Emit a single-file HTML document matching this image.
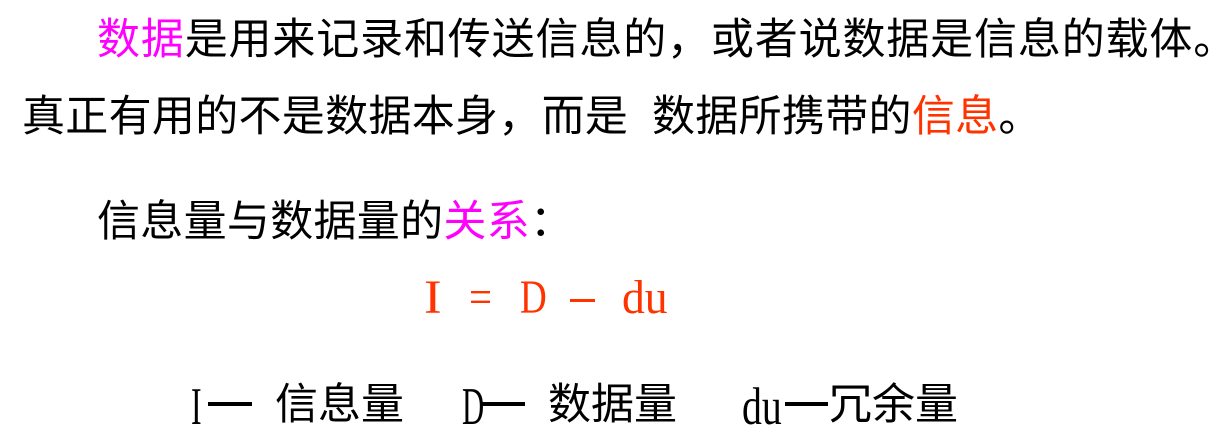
<!DOCTYPE html>
<html><head><meta charset="utf-8"><style>
body{margin:0;width:1220px;height:434px;background:#fff;overflow:hidden;position:relative;font-family:"Liberation Sans","Noto Sans CJK SC",sans-serif;color:#000}
.t{position:absolute;font-size:43px;line-height:44px;white-space:nowrap}
.m{color:#ff00ff}.r{color:#ff3300}
.s{position:absolute;font-family:"Liberation Serif",serif;font-size:48px;line-height:44px;white-space:nowrap;transform-origin:left}
.b{font-size:53px}
.d{position:absolute;height:4px;background:#000}
</style></head><body>
<div class="t" style="left:97px;top:18px;letter-spacing:0.85px"><span class="m">数据</span>是用来记录和传送信息的，或者说数据是信息的载体。</div>
<div class="t" style="left:22px;top:95px;letter-spacing:0.3px">真正有用的不是数据本身，而是</div>
<div class="t" style="left:652px;top:95px;letter-spacing:0.3px">数据所携带的<span style="color:#ff3300">信息</span>。</div>
<div class="t" style="left:97px;top:200px;letter-spacing:0.3px">信息量与数据量的<span class="m">关系</span>：</div>
<div class="s r" style="left:424px;top:276px;transform:scaleX(1.1)">I</div>
<div class="s r" style="left:469px;top:276px;transform:scaleX(0.85)">=</div>
<div class="s r" style="left:520px;top:276px;transform:scaleX(0.77)">D</div>
<div style="position:absolute;left:570px;top:299px;width:25px;height:3px;background:#ff3300"></div>
<div class="s r" style="left:622px;top:276px;transform:scaleX(0.95)">du</div>
<div class="s b" style="left:191px;top:385px;transform:scaleX(0.6)">I</div>
<div class="d" style="left:208px;top:402px;width:44px"></div>
<div class="t" style="left:275px;top:383px">信息量</div>
<div class="s b" style="left:462px;top:385px;transform:scaleX(0.58)">D</div>
<div class="d" style="left:481px;top:402px;width:44px"></div>
<div class="t" style="left:548px;top:383px">数据量</div>
<div class="s b" style="left:742px;top:385px;transform:scaleX(0.75)">du</div>
<div class="d" style="left:785px;top:402px;width:43px"></div>
<div class="t" style="left:829px;top:383px">冗余量</div>
</body></html>
